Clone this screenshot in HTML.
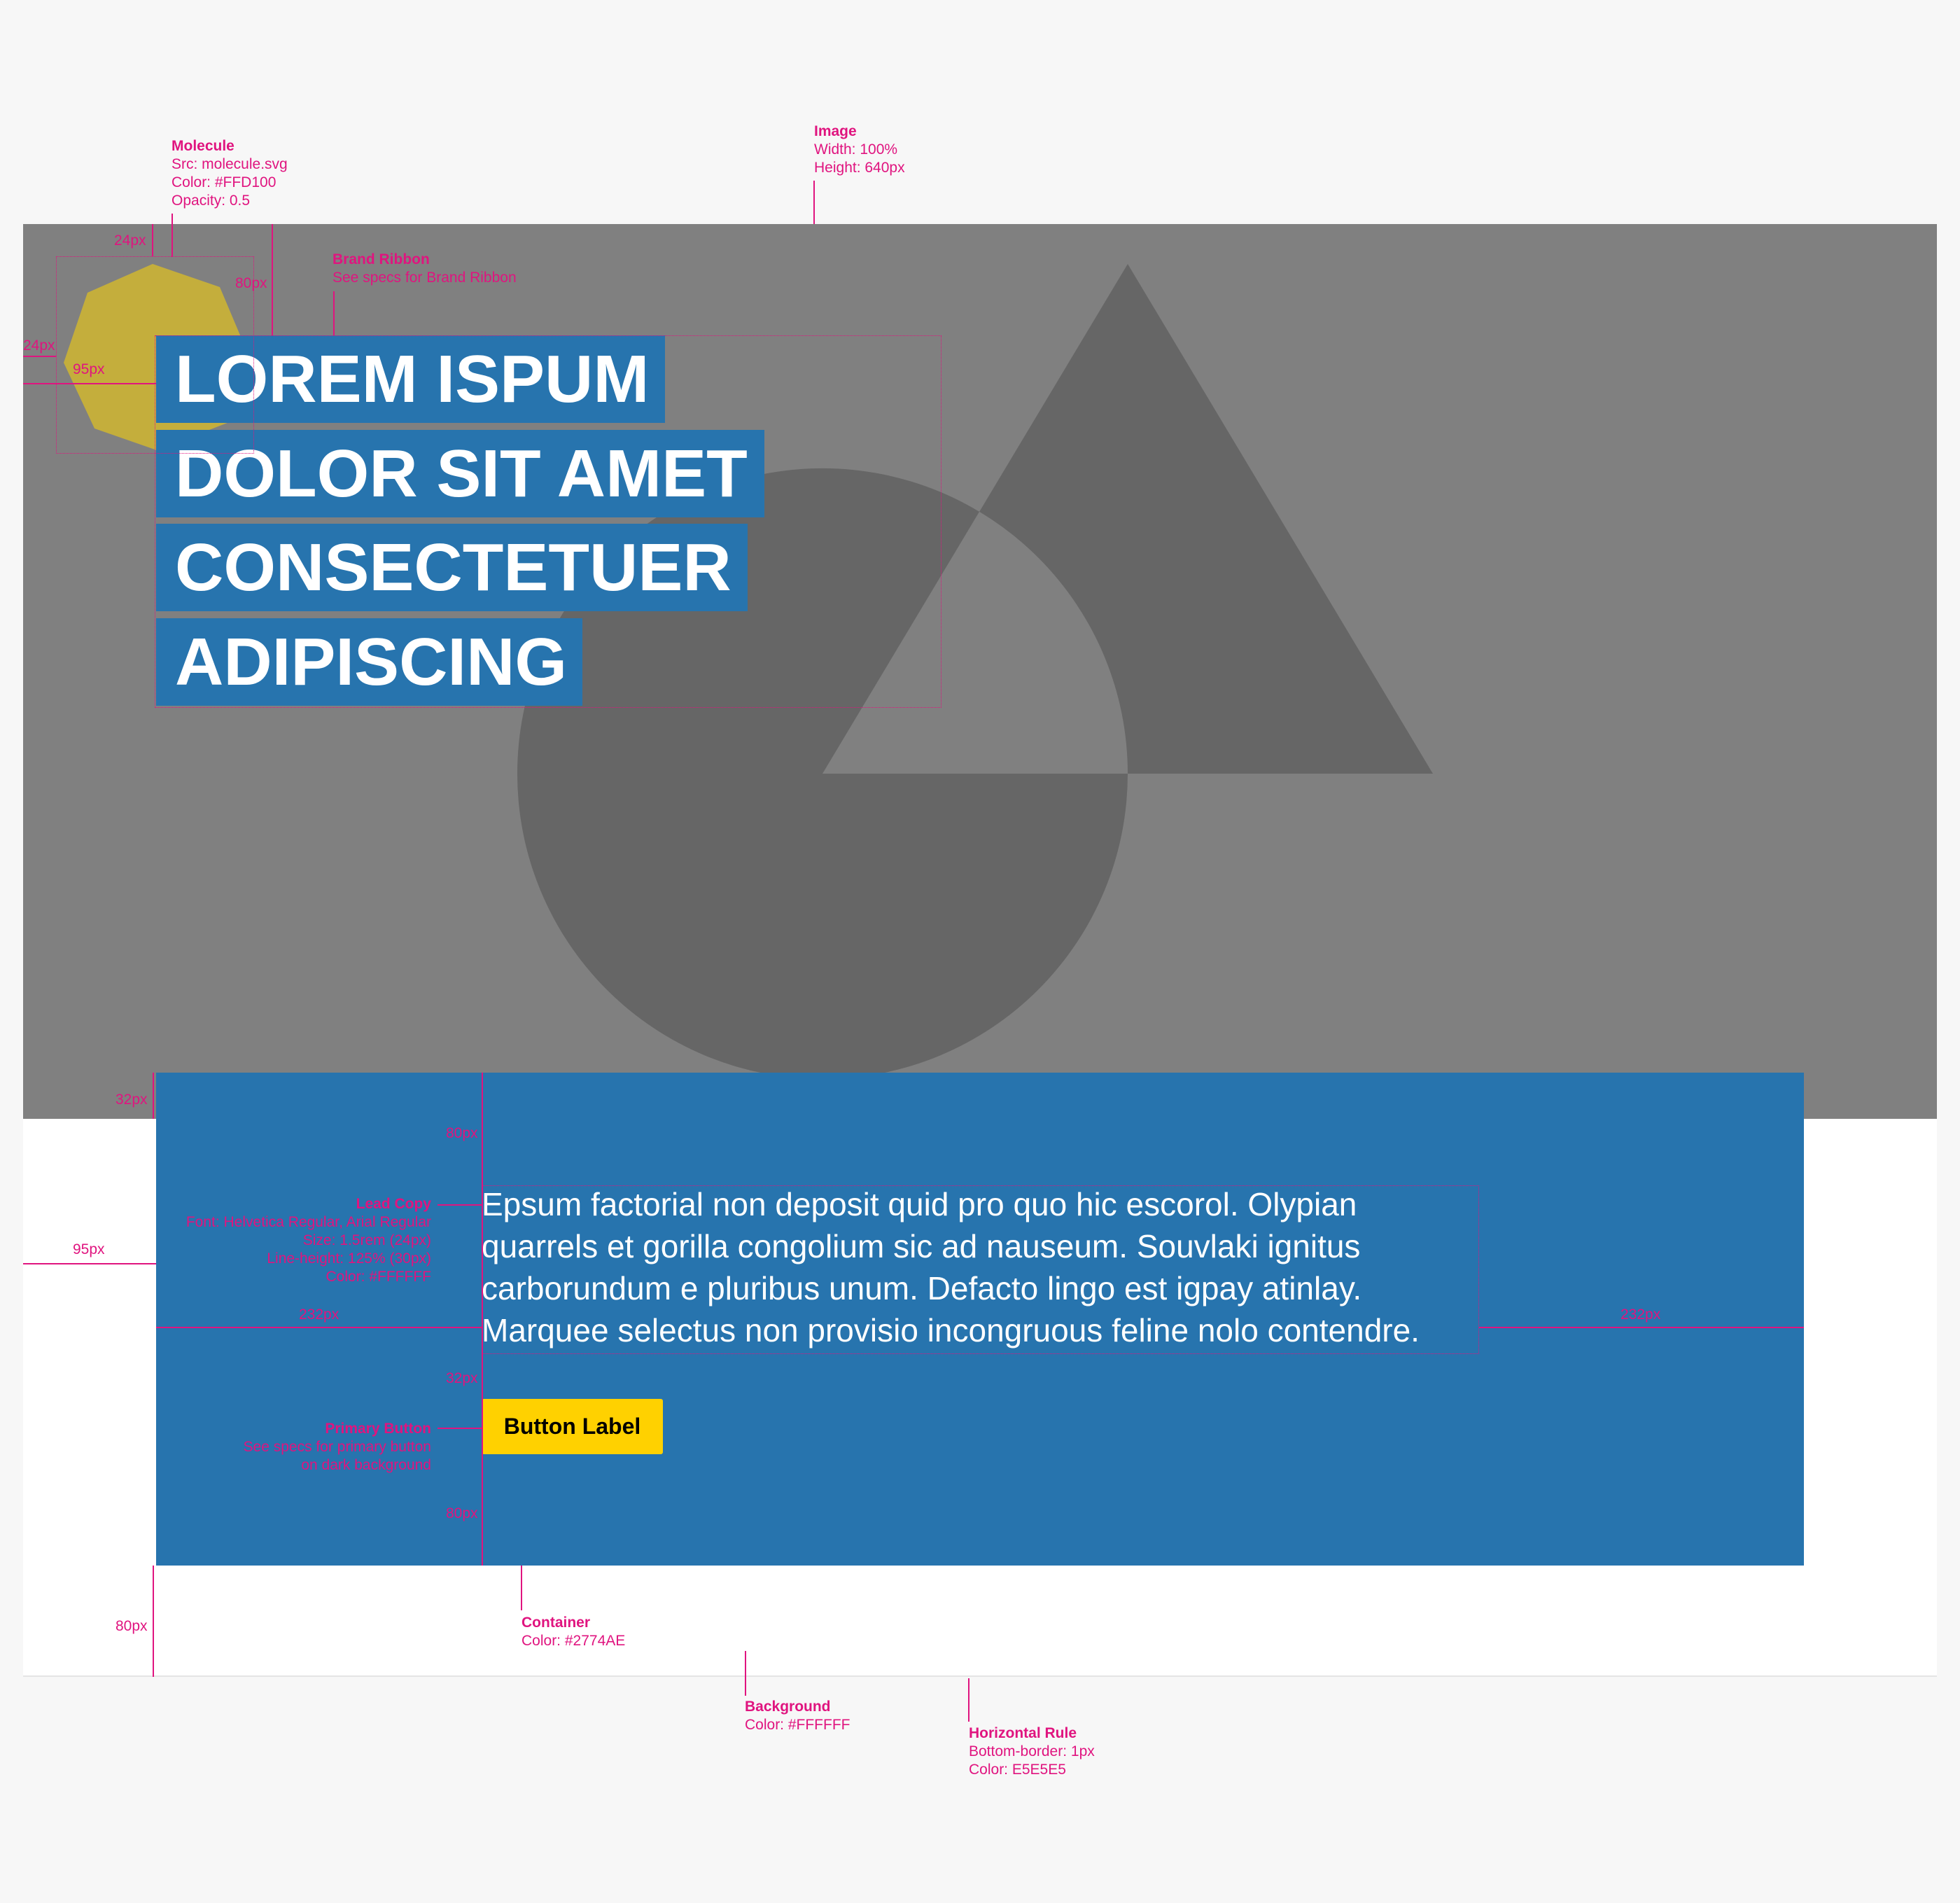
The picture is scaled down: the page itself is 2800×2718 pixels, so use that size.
<!DOCTYPE html>
<html><head><meta charset="utf-8"><style>
*{margin:0;padding:0;box-sizing:border-box}
body{width:2800px;height:2718px;background:#f7f7f7;position:relative;overflow:hidden;font-family:"Liberation Sans",Arial,sans-serif}
.a{position:absolute}
.n{position:absolute;color:#e0147f;font-size:21px;line-height:26px;white-space:nowrap}
.n b{font-weight:bold}
.r{text-align:right}
.l{position:absolute;background:#e0147f}
.rib{position:absolute;left:223px;height:125px;background:#2774AE;color:#fff;font-weight:bold;font-size:96px;line-height:125px;padding-left:27px;white-space:nowrap}
.dot{position:absolute;border:1px dotted #e0147f}
</style></head><body>
<div class="a" style="left:33px;top:320px;width:2734px;height:1278px;background:#808080;overflow:hidden">
<svg width="2734" height="1278" style="position:absolute;left:0;top:0">
<path fill="#666" fill-rule="evenodd" transform="translate(-33,-320)" d="M1611 377 L2047 1105 L1175 1105 Z M739 1105 A436 436 0 1 0 1611 1105 A436 436 0 1 0 739 1105 Z"/>
<polygon fill="#c4ae3c" transform="translate(-33,-320)" points="218,377 314,410 352,500 335,600 224,643 135,612 91,518 125,418"/>
</svg>
</div>
<div class="a" style="left:33px;top:1598px;width:2734px;height:797px;background:#fff;border-bottom:2px solid #e5e5e5"></div>
<div class="a" style="left:223px;top:1532px;width:2354px;height:704px;background:#2774AE"></div>

<div class="rib" style="top:479px;width:727px">LOREM ISPUM</div>
<div class="rib" style="top:614px;width:869px">DOLOR SIT AMET</div>
<div class="rib" style="top:748px;width:845px">CONSECTETUER</div>
<div class="rib" style="top:883px;width:609px">ADIPISCING</div>

<div class="dot" style="left:80px;top:366px;width:283px;height:282px"></div>
<div class="dot" style="left:221px;top:479px;width:1124px;height:532px"></div>
<div class="dot" style="left:688px;top:1693px;width:1425px;height:241px"></div>

<div class="a" style="left:688px;top:1690px;width:1420px;color:#fff;font-size:46px;line-height:60px">Epsum factorial non deposit quid pro quo hic escorol. Olypian quarrels et gorilla congolium sic ad nauseum. Souvlaki ignitus carborundum e pluribus unum. Defacto lingo est igpay atinlay. Marquee selectus non provisio incongruous feline nolo contendre.</div>
<div class="a" style="left:688px;top:1998px;width:259px;height:79px;background:#FFD100;border-radius:3px;color:#000;font-weight:bold;font-size:32px;line-height:79px;text-align:center">Button Label</div>

<div class="n" style="left:245px;top:196px"><b>Molecule</b><br>Src: molecule.svg<br>Color: #FFD100<br>Opacity: 0.5</div>
<div class="n" style="left:1163px;top:175px"><b>Image</b><br>Width: 100%<br>Height: 640px</div>
<div class="n" style="left:475px;top:358px"><b>Brand Ribbon</b><br>See specs for Brand Ribbon</div>
<div class="n" style="left:745px;top:2305px"><b>Container</b><br>Color: #2774AE</div>
<div class="n" style="left:1064px;top:2425px"><b>Background</b><br>Color: #FFFFFF</div>
<div class="n" style="left:1384px;top:2463px"><b>Horizontal Rule</b><br>Bottom-border: 1px<br>Color: E5E5E5</div>
<div class="n r" style="right:2184px;top:1707px"><b>Lead Copy</b><br>Font: Helvetica Regular, Arial Regular<br>Size: 1.5rem (24px)<br>Line-height: 125% (30px)<br>Color: #FFFFFF</div>
<div class="n r" style="right:2184px;top:2028px"><b>Primary Button</b><br>See specs for primary button<br>on dark background</div>

<div class="n" style="left:163px;top:331px">24px</div>
<div class="n" style="left:336px;top:392px">80px</div>
<div class="n" style="left:33px;top:481px">24px</div>
<div class="n" style="left:104px;top:515px">95px</div>
<div class="n" style="left:165px;top:1558px">32px</div>
<div class="n" style="left:637px;top:1606px">80px</div>
<div class="n" style="left:104px;top:1772px">95px</div>
<div class="n" style="left:427px;top:1865px">232px</div>
<div class="n" style="left:2315px;top:1865px">232px</div>
<div class="n" style="left:637px;top:1956px">32px</div>
<div class="n" style="left:637px;top:2149px">80px</div>
<div class="n" style="left:165px;top:2310px">80px</div>

<div class="l" style="left:245px;top:305px;width:2px;height:62px"></div>
<div class="l" style="left:217px;top:320px;width:2px;height:46px"></div>
<div class="l" style="left:388px;top:320px;width:2px;height:159px"></div>
<div class="l" style="left:476px;top:416px;width:2px;height:63px"></div>
<div class="l" style="left:1162px;top:258px;width:2px;height:62px"></div>
<div class="l" style="left:33px;top:508px;width:47px;height:2px"></div>
<div class="l" style="left:33px;top:547px;width:190px;height:2px"></div>
<div class="l" style="left:218px;top:1532px;width:2px;height:66px"></div>
<div class="l" style="left:688px;top:1532px;width:2px;height:704px"></div>
<div class="l" style="left:33px;top:1804px;width:190px;height:2px"></div>
<div class="l" style="left:223px;top:1895px;width:465px;height:2px"></div>
<div class="l" style="left:2113px;top:1895px;width:464px;height:2px"></div>
<div class="l" style="left:625px;top:1720px;width:63px;height:2px"></div>
<div class="l" style="left:625px;top:2039px;width:63px;height:2px"></div>
<div class="l" style="left:218px;top:2236px;width:2px;height:159px"></div>
<div class="l" style="left:744px;top:2236px;width:2px;height:64px"></div>
<div class="l" style="left:1064px;top:2358px;width:2px;height:64px"></div>
<div class="l" style="left:1383px;top:2397px;width:2px;height:62px"></div>
</body></html>
